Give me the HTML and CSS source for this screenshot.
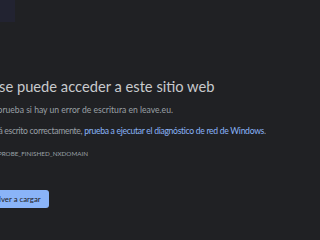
FILE: index.html
```html
<!DOCTYPE html>
<html lang="es">
<head>
<meta charset="utf-8">
<link rel="stylesheet" href="styles.css">
</head>
<body>
<div class="corner"></div>
<main class="page">
  <h1 class="title">No se puede acceder a este sitio web</h1>
  <p class="line first">Comprueba si hay un error de escritura en leave.eu.</p>
  <p class="line second">Si está escrito correctamente, <span class="link">prueba a ejecutar el diagnóstico de red de Windows</span>.</p>
  <p class="code">DNS_PROBE_FINISHED_NXDOMAIN</p>
  <div class="actions"><button class="reload">Volver a cargar</button></div>
</main>
</body>
</html>
```
FILE: styles.css
```css
html, body {
  margin: 0;
  padding: 0;
  background: #202124;
  width: 320px;
  height: 240px;
  overflow: hidden;
}
body {
  position: relative;
  font-family: "Lato", "Noto Sans", sans-serif;
  color: #9aa0a6;
}
.corner {
  position: absolute;
  left: 0;
  top: 0;
  width: 15px;
  height: 22px;
  background: #25253a;
  opacity: 0.6;
}
.page {
  margin-left: -18px;
  padding-top: 77px;
}
.title {
  margin: 0 0 0 -6px;
  font-size: 14.7px;
  font-weight: 400;
  line-height: 18px;
  color: #c8cacd;
  white-space: nowrap;
}
.line {
  margin: 0;
  font-size: 8.6px;
  line-height: 10px;
  white-space: nowrap;
}
.first { margin-top: 10px; margin-left: -2px; }
.second { margin-top: 11px; margin-left: -2px; letter-spacing: -0.3px; }
.link { color: #8ab4f8; }
.code {
  margin: 14px 0 0;
  font-size: 6.3px;
  line-height: 8px;
  text-transform: uppercase;
}
.actions {
  margin-top: 32px;
}
.reload {
  display: block;
  font-family: inherit;
  font-size: 7.8px;
  background: #8ab4f8;
  color: #202124;
  border: 0;
  border-radius: 3px;
  height: 18px;
  padding: 0 8px;
}
```
